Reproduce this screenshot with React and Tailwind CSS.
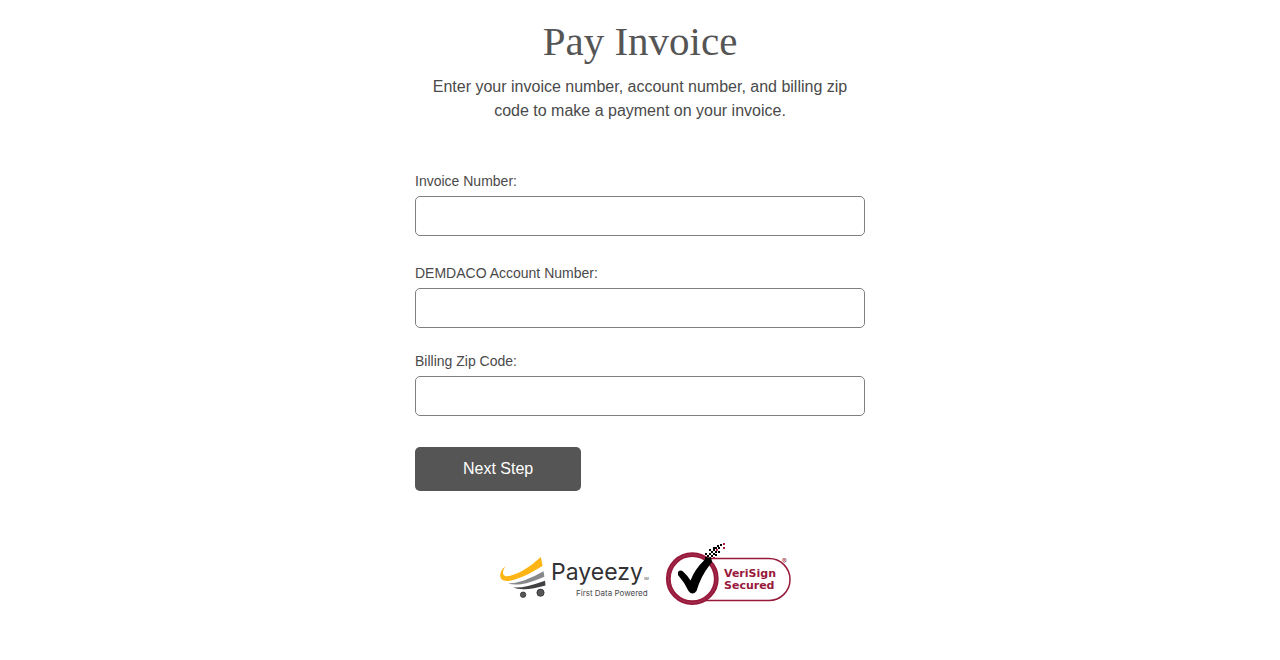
import React, { useState } from 'react';

const FIELDS = [
    { id: 'invoiceNumber', label: 'Invoice Number:', spacing: 'mb-7' },
    { id: 'accountNumber', label: 'DEMDACO Account Number:', spacing: 'mb-6' },
    { id: 'billingZip', label: 'Billing Zip Code:', spacing: 'mb-[31px]' },
];

// Checkered trail at the end of the check mark: [x, y, isRed]
const TRAIL = [
    [45, 17], [47, 15], [45, 13], [49, 13], [51, 15], [53, 17, true], [55, 14], [49, 9], [53, 13],
    [51, 11], [58, 11], [53, 9], [55, 11], [56, 9, true], [53, 7], [55, 7], [57, 5], [60, 4],
    [58, 7], [63, 3, true], [63, 7, true],
];

const TextField = ({ id, label, spacing, value, onChange }) => (
    <div className={spacing}>
        <label htmlFor={id} className="block text-sm leading-[18px] mb-1.5">{label}</label>
        <input
            id={id}
            name={id}
            type="text"
            value={value}
            onChange={onChange}
            className="block w-full h-10 px-3 bg-white border border-[#808080] rounded-[5px]"
        />
    </div>
);

const PayeezyLogo = () => (
    <svg width="150" height="50" viewBox="0 -2 150 50" role="img" aria-label="Payeezy">
        <path d="M40.8 5 L42.6 13.8 C32 20.5 22 26 11 28.6 C4 30 .2 28 .2 23.6 C.2 20 2.6 16 5.4 14.6 C3.4 17.4 2.4 20.4 3.4 22.4 C5.4 26.4 14 23 22.5 18.7 Q32 13.5 40.8 5Z" fill="#fdb515" />
        <path d="M43.5 19.3 L44.4 24.7 Q31 30.5 21 32.2 Q13 33.3 8 31.2 Q15 31.4 24 28.4 Q34 25 43.5 19.3Z" fill="#87888a" />
        <path d="M45 28.8 L45.5 33.4 Q33 37 24 37.2 Q17 37.3 13 35.5 Q20 36 28 34 Q36 32 45 28.8Z" fill="#414042" />
        <circle cx="23.1" cy="42.7" r="2.7" fill="#57575a" stroke="#2e2e30" strokeWidth="0.8" />
        <circle cx="40.5" cy="40.7" r="3.6" fill="#57575a" stroke="#2e2e30" strokeWidth="0.8" />
        <text x="51" y="28" fontFamily="Inter, sans-serif" fontSize="23" fontWeight="400" fill="#323234">Payeezy</text>
        <text x="144" y="28" fontFamily="Inter, sans-serif" fontSize="3" fill="#323234">SM</text>
        <text x="76" y="44" fontFamily="Inter, sans-serif" fontSize="8" fill="#4a4a4c">First Data Powered</text>
    </svg>
);

const VeriSignLogo = () => (
    <svg width="135" height="70" viewBox="0 0 135 70" role="img" aria-label="VeriSign Secured">
        <rect x="10" y="18.5" width="120" height="42" rx="21" fill="#fff" stroke="#98193b" strokeWidth="1.5" />
        <circle cx="32.3" cy="38.7" r="24" fill="#fff" stroke="#98193b" strokeWidth="4.8" />
        <circle cx="32.3" cy="38.7" r="24" fill="none" stroke="#a8425c" strokeWidth="0.6" />
        <path d="M18 32 Q20.5 29.5 23 31.5 Q27 35 30.5 40.5 Q35 29 43.5 21 L46 18 L51 17 L52 22 L49 26 Q41 36 36.5 51 Q32.5 56 28.5 51 Q25 43 18 35Z" fill="#000" />
        {TRAIL.map(([x, y, red]) => (
            <rect key={`${x}-${y}`} x={x} y={y} width="2" height="2" fill={red ? '#b01c42' : '#000'} />
        ))}
        <text x="64" y="37" fontFamily="DejaVu Sans, sans-serif" fontSize="11" fontWeight="700" fill="#98193b">VeriSign</text>
        <text x="64" y="49" fontFamily="DejaVu Sans, sans-serif" fontSize="11" fontWeight="700" fill="#98193b">Secured</text>
        <text x="122" y="24" fontFamily="Inter, sans-serif" fontSize="7" fill="#98193b">®</text>
    </svg>
);

const App = () => {
    const [values, setValues] = useState({ invoiceNumber: '', accountNumber: '', billingZip: '' });

    const handleChange = (e) => {
        setValues({ ...values, [e.target.name]: e.target.value });
    };

    return (
        <main className="w-full max-w-[450px] mx-auto pt-[15px] pb-12 bg-white text-[#4a4a4a] font-['Liberation_Sans',Arial,sans-serif]">
            <h1 className="text-center text-[41px] leading-[52px] text-[#555] font-['Liberation_Serif',serif]">
                Pay Invoice
            </h1>
            <p className="mt-2 mb-[49px] px-4 text-center text-base leading-6">
                Enter your invoice number, account number, and billing zip code to make a payment on your invoice.
            </p>

            <form onSubmit={(e) => e.preventDefault()}>
                {FIELDS.map((field) => (
                    <TextField
                        key={field.id}
                        {...field}
                        value={values[field.id]}
                        onChange={handleChange}
                    />
                ))}
                <button type="submit" className="block h-11 px-12 rounded-[5px] bg-[#555] text-white text-base">
                    Next Step
                </button>
            </form>

            <div className="mt-[49px] pl-[15px] flex justify-center items-center gap-2.5">
                <PayeezyLogo />
                <VeriSignLogo />
            </div>
        </main>
    );
};

export default App;
